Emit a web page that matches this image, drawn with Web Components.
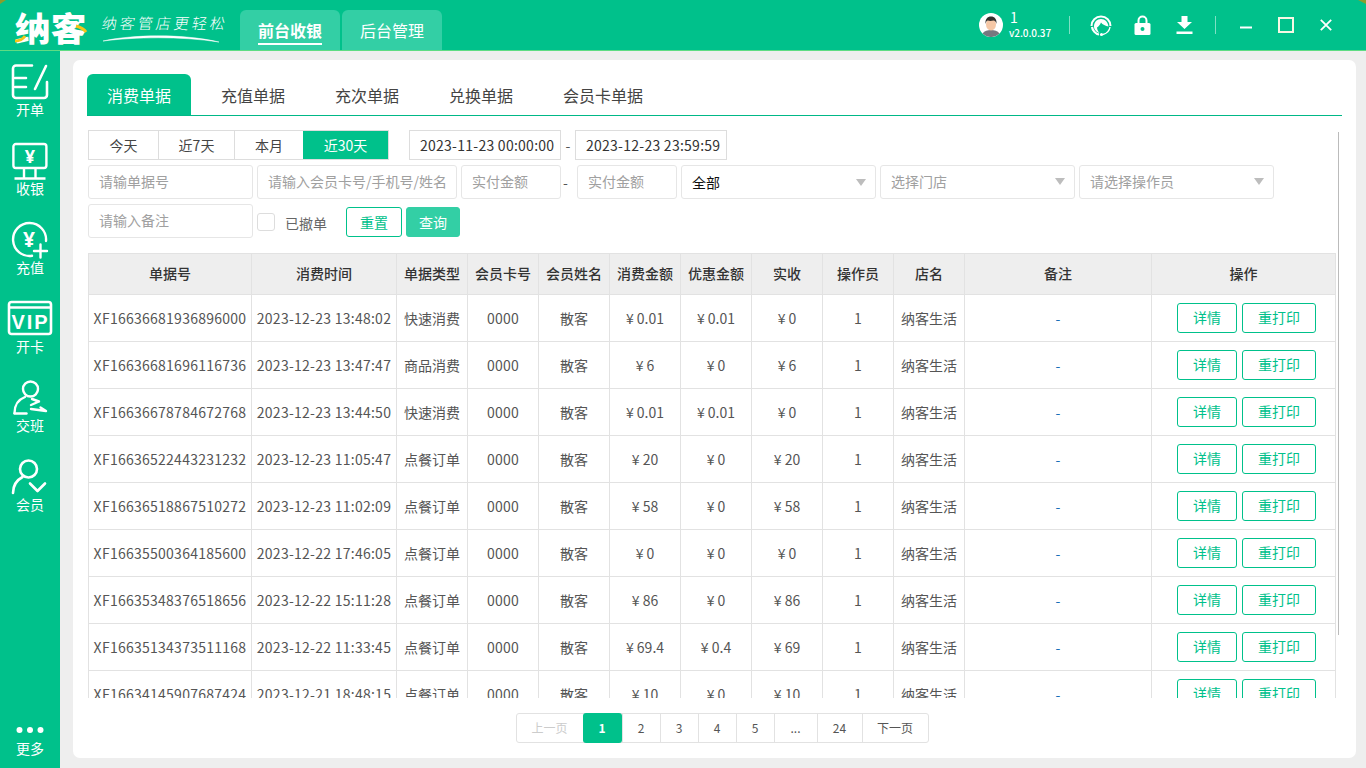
<!DOCTYPE html>
<html lang="zh">
<head>
<meta charset="utf-8">
<title>纳客</title>
<style>
    html, body { margin: 0; height: 100%; overflow: hidden; }
    body { font-family: "Noto Sans CJK SC", "Noto Sans", sans-serif; font-size: 14px; color: #555; background: #eee; }
</style>
</head>
<body>
<nk-app>
    <nk-top-bar slot="top"></nk-top-bar>
    <nk-side-nav slot="side">
        <nk-nav-item label="开单">
            <svg width="38" height="38" viewBox="0 0 38 38" fill="none" stroke="#fff" stroke-width="2.6" stroke-linecap="round">
                <path d="M21 2.5H5a3 3 0 0 0-3 3V32a3 3 0 0 0 3 3h28a3 3 0 0 0 3-3V19"/>
                <path d="M4 15h11M4 24h11M35 3 24 26"/>
            </svg>
        </nk-nav-item>
        <nk-nav-item label="收银">
            <svg width="38" height="38" viewBox="0 0 38 38" fill="none" stroke="#fff" stroke-width="2.4">
                <rect x="2.4" y="2" width="33" height="24" rx="2.5"/>
                <path d="M13 26v10M24.5 26v10M3.5 36.5h31"/>
                <text x="19" y="21" text-anchor="middle" font-size="18" font-weight="700" fill="#fff" stroke="none" font-family="Noto Sans, sans-serif">¥</text>
            </svg>
        </nk-nav-item>
        <nk-nav-item label="充值">
            <svg width="38" height="38" viewBox="0 0 38 38" fill="none" stroke="#fff" stroke-width="2.4" stroke-linecap="round">
                <path d="M35 20A16.5 16.5 0 1 0 21 34.800"/>
                <path d="M29.5 23.5v13M23 30h13"/>
                <text x="18" y="26" text-anchor="middle" font-size="21" font-weight="700" fill="#fff" stroke="none" font-family="Noto Sans, sans-serif">¥</text>
            </svg>
        </nk-nav-item>
        <nk-nav-item label="开卡">
            <svg width="46" height="38" viewBox="0 0 46 38" fill="none" stroke="#fff" stroke-width="2.6">
                <rect x="2" y="2" width="42" height="32" rx="2.5"/>
                <path d="M2 7.5h42"/>
                <text x="23.5" y="29" text-anchor="middle" font-size="20" font-weight="700" letter-spacing="2" fill="#fff" stroke="none" font-family="Liberation Sans, sans-serif">VIP</text>
            </svg>
        </nk-nav-item>
        <nk-nav-item label="交班">
            <svg width="38" height="38" viewBox="0 0 38 38" fill="none" stroke="#fff" stroke-width="2.4" stroke-linecap="round" stroke-linejoin="round">
                <circle cx="19.5" cy="10" r="7.5"/>
                <path d="M3.5 34c0-8 4-13.500 10.500-16"/>
                <path d="M3.5 34.500h12"/>
                <path d="M21 20l7 2.500-8 3.500"/>
                <path d="M20 30l15 2-5.500-3.500"/>
            </svg>
        </nk-nav-item>
        <nk-nav-item label="会员">
            <svg width="38" height="38" viewBox="0 0 38 38" fill="none" stroke="#fff" stroke-width="2.6" stroke-linecap="round" stroke-linejoin="round">
                <circle cx="17.5" cy="11" r="8.5"/>
                <path d="M2 35c0-7 4-13 9.500-16"/>
                <path d="M19 25.500l7.500 7.500 7.500-7.500"/>
            </svg>
        </nk-nav-item>
        <nk-nav-item label="更多" class="more">
            <svg width="30" height="10" viewBox="0 0 30 10" fill="#fff">
                <circle cx="4.5" cy="5" r="3"/><circle cx="15" cy="5" r="3"/><circle cx="25.5" cy="5" r="3"/>
            </svg>
        </nk-nav-item>
    </nk-side-nav>
    <nk-receipts slot="main"></nk-receipts>
</nk-app>

<script>
class NkApp extends HTMLElement {
    constructor() {
        super();
        this.attachShadow({ mode: 'open' });
    }

    connectedCallback() {
        this.shadowRoot.innerHTML = `
            <style>
                :host { display: grid; grid-template-columns: 60px 1fr; grid-template-rows: 51px 1fr; width: 1366px; height: 768px; }
                .top { grid-column: 1 / 3; }
                .main { background: #eee; padding: 9px 10px 10px 13px; min-width: 0; min-height: 0; display: flex; }
            </style>
            <div class="top"><slot name="top"></slot></div>
            <slot name="side"></slot>
            <div class="main"><slot name="main"></slot></div>
        `;
    }
}

class NkTopBar extends HTMLElement {
    constructor() {
        super();
        this.attachShadow({ mode: 'open' });
    }

    connectedCallback() {
        this.shadowRoot.innerHTML = `
            <style>
                :host { display: flex; height: 50px; background: #00c18b; border-bottom: 1px solid #5fdc83; color: #fff; align-items: stretch; position: relative; }
                .logo { width: 240px; flex: none; position: relative; }
                .mark { position: absolute; left: 15px; top: 3px; font-size: 33px; line-height: 48px; font-weight: 900; letter-spacing: 0; color: #fff; transform: scaleX(1.08); transform-origin: left center; white-space: nowrap; }
                .slogan { position: absolute; left: 102px; top: 10px; font-size: 15px; line-height: 26px; letter-spacing: 3px; font-weight: 300; transform: skewX(-10deg); white-space: nowrap; }
                .deco { position: absolute; left: 0; top: 0; }
                .tabs { display: flex; gap: 2px; padding-top: 10px; }
                .tab { width: 100px; background: #33cfa5; border-radius: 6px 6px 0 0; font-size: 16px; display: flex; align-items: center; justify-content: center; box-sizing: border-box; }
                .tab.on span { font-weight: 700; border-bottom: 2px solid #fff; line-height: 26px; margin-top: 2px; }
                .right { margin-left: auto; display: flex; align-items: center; }
                .user { display: flex; align-items: center; gap: 6px; width: 90px; }
                .who { display: flex; flex-direction: column; margin-top: -1px; }
                .who b { font-weight: 400; font-size: 14px; line-height: 16px; padding-left: 1px; }
                .who i { font-style: normal; font-weight: 500; font-size: 10px; letter-spacing: -.1px; line-height: 16px; }
                .sep { width: 1px; height: 18px; background: #7fe0c4; }
                svg { display: block; flex: none; }
                .corner { position: absolute; top: 0; }
            </style>
            <div class="logo">
                <span class="mark">纳客</span>
                <span class="slogan">纳客管店更轻松</span>
                <svg class="deco" width="240" height="50" fill="none">
                    <path d="M15 41c4 0 8-2 10-5" stroke="#f5c518" stroke-width="3"/>
                    <path d="M76 26c4 1 8 3 10 6" stroke="#f5c518" stroke-width="3"/>
                    <path d="M103 41C130 35 180 33 219 42 180 36 135 37 103 41z" fill="#fff" stroke="#fff" stroke-width=".5"/>
                </svg>
            </div>
            <div class="tabs">
                <div class="tab on"><span>前台收银</span></div>
                <div class="tab"><span>后台管理</span></div>
            </div>
            <div class="right">
                <div class="user">
                    <svg width="24" height="24" viewBox="0 0 24 24">
                        <circle cx="12" cy="12" r="12" fill="#fff"/>
                        <path d="M3.5 20.500c2-3 5-3.500 8.500-3.500s6.500.5 8.500 3.500a12 12 0 0 1-17 0z" fill="#77777f"/>
                        <ellipse cx="12" cy="11.500" rx="5" ry="6" fill="#f5c7a6"/>
                        <path d="M6.500 11c-.5-5 2-7.500 5.500-7.500s6 2.500 5.500 7.500c-.5-2-1.500-3.500-3-3.500-2 .5-4.500.5-5.500 0-1.500 0-2 1.500-2.500 3.500z" fill="#33302e"/>
                    </svg>
                    <div class="who"><b>1</b><i>v2.0.0.37</i></div>
                </div>
                <div class="sep"></div>
                <svg style="margin-left:20px" width="22" height="24" viewBox="0 0 22 24" fill="none" stroke="#fff">
                    <path d="M1.500 13a9.500 9.500 0 0 1 19 0" stroke-width="2"/>
                    <path d="M4 13.500C4 9 7 6 11 6s7 3 7.500 7.500c-3-.5-6-2-7.500-4-1 2.500-2.500 4-4 5 .2 2 1 4 2.500 5.500C6 19 4 16 4 13.500z" fill="#fff" stroke="none"/>
                    <path d="M2 14c.5 3.500 3.500 7 7 7.500" stroke-width="2.200"/>
                    <path d="M20 14c-.5 3.500-3.500 6.500-7 7.500" stroke-width="1.400"/>
                    <circle cx="11.500" cy="21.500" r="1.600" fill="#fff" stroke="none"/>
                </svg>
                <svg style="margin-left:22px" width="17" height="20" viewBox="0 0 17 20">
                    <path d="M4.500 9V5.500a4 4 0 0 1 8 0V9" fill="none" stroke="#fff" stroke-width="2"/>
                    <rect x=".5" y="8" width="16" height="12" rx="1.500" fill="#fff"/>
                    <circle cx="8.500" cy="14" r="2" fill="#00c18b"/>
                </svg>
                <svg style="margin-left:25px" width="17" height="20" viewBox="0 0 17 20" fill="#fff">
                    <path d="M5.500 1h6v6h4.500l-7.500 7-7.500-7h4.500z"/>
                    <rect x=".5" y="16.500" width="16" height="2.500"/>
                </svg>
                <div class="sep" style="margin-left:22px"></div>
                <svg style="margin-left:24px" width="12" height="16" viewBox="0 0 12 16"><rect y="9.500" width="12" height="2" fill="#fff"/></svg>
                <svg style="margin-left:26px" width="16" height="16" viewBox="0 0 16 16"><rect x="1" y="1" width="14" height="14" fill="none" stroke="#f6f8e4" stroke-width="2"/></svg>
                <svg style="margin-left:26px;margin-right:34px" width="12" height="12" viewBox="0 0 12 12"><path d="M.8.800l10.400 10.400M11.200.800.800 11.200" stroke="#fff" stroke-width="1.800"/></svg>
            </div>
            <svg class="corner" style="left:0" width="6" height="4"><path d="M0 0h6L0 4z" fill="#8c9c2c"/></svg>
            <svg class="corner" style="right:0" width="8" height="4"><path d="M0 0h8v4z" fill="#8c9c2c"/></svg>
        `;
    }
}

class NkSideNav extends HTMLElement {
    constructor() {
        super();
        this.attachShadow({ mode: 'open' });
    }

    connectedCallback() {
        this.shadowRoot.innerHTML = `
            <style>
                :host { display: flex; flex-direction: column; width: 60px; background: #00c18b; padding-top: 12px; box-sizing: border-box; }
                ::slotted(.more) { margin-top: auto; height: 34px; padding-bottom: 9px; }
            </style>
            <slot></slot>
        `;
    }
}

class NkNavItem extends HTMLElement {
    constructor() {
        super();
        this.attachShadow({ mode: 'open' });
    }

    connectedCallback() {
        this.shadowRoot.innerHTML = `
            <style>
                :host { display: flex; flex-direction: column; align-items: center; height: 79px; color: #fff; font-size: 14px; line-height: 20px; }
                .icon { height: 38px; display: flex; align-items: flex-start; justify-content: center; }
                .label { margin-top: -2px; }
                :host(.more) .icon { height: 10px; margin-bottom: 5px; }
            </style>
            <div class="icon"><slot></slot></div>
            <div class="label">${this.getAttribute('label')}</div>
        `;
    }
}

class NkTabs extends HTMLElement {
    constructor() {
        super();
        this.attachShadow({ mode: 'open' });
    }

    connectedCallback() {
        const tabs = (this.getAttribute('items') || '').split(',');
        this.shadowRoot.innerHTML = `
            <style>
                :host { display: flex; gap: 10px; height: 41px; border-bottom: 1px solid #00b887; font-size: 16px; color: #444; }
                div { padding: 0 20px; line-height: 43px; border-radius: 6px 6px 0 0; }
                .on { background: #00c18b; color: #fff; }
            </style>
            ${tabs.map((t, i) => `<div class="${i === 0 ? 'on' : ''}">${t}</div>`).join('')}
        `;
    }
}

class NkRange extends HTMLElement {
    constructor() {
        super();
        this.attachShadow({ mode: 'open' });
    }

    connectedCallback() {
        const widths = [69, 76, 69, 85];
        const items = ['今天', '近7天', '本月', '近30天'];
        this.shadowRoot.innerHTML = `
            <style>
                :host { display: flex; height: 30px; box-sizing: border-box; border: 1px solid #ddd; }
                div { display: flex; align-items: center; justify-content: center; border-left: 1px solid #ddd; box-sizing: border-box; color: #444; padding-bottom: 1px; }
                div:first-of-type { border-left: 0; }
                .on { background: #00c18b; color: #fff; border-left: 0; }
            </style>
            ${items.map((t, i) => `<div class="${i === 3 ? 'on' : ''}" style="width:${widths[i]}px">${t}</div>`).join('')}
        `;
    }
}

class NkField extends HTMLElement {
    constructor() {
        super();
        this.attachShadow({ mode: 'open' });
    }

    connectedCallback() {
        const w = this.getAttribute('w');
        const arrow = this.hasAttribute('arrow');
        this.shadowRoot.innerHTML = `
            <style>
                :host { display: flex; align-items: center; box-sizing: border-box; width: ${w}px; height: 34px; padding: 0 10px 2px; border: 1px solid #e6e6e6; border-radius: 3px; color: #a0a0a0; white-space: nowrap; overflow: hidden; }
                :host([value]) { color: #111; padding-bottom: 0; }
                :host([date]) { height: 30px; border-color: #ddd; border-radius: 0; color: #333; letter-spacing: .26px; padding-bottom: 1px; }
                i { margin-left: auto; width: 0; height: 0; border: 5.5px solid transparent; border-top: 7px solid #bdbdbd; border-bottom: 0; margin-right: -1px; }
            </style>
            <slot></slot>${arrow ? '<i></i>' : ''}
        `;
    }
}

class NkButton extends HTMLElement {
    constructor() {
        super();
        this.attachShadow({ mode: 'open' });
    }

    connectedCallback() {
        this.shadowRoot.innerHTML = `
            <style>
                :host { display: inline-flex; align-items: center; justify-content: center; box-sizing: border-box; height: 30px; padding-bottom: 1px; border: 1px solid #00c18b; border-radius: 3px; color: #00c18b; background: #fff; font-size: 14px; white-space: nowrap; }
                :host([solid]) { background: #33cfa5; border-color: #33cfa5; color: #fff; }
            </style>
            <slot></slot>
        `;
    }
}

class NkFilters extends HTMLElement {
    constructor() {
        super();
        this.attachShadow({ mode: 'open' });
    }

    connectedCallback() {
        this.shadowRoot.innerHTML = `
            <style>
                :host { display: flex; flex-direction: column; gap: 5px; padding-left: 1px; }
                .row { display: flex; align-items: center; gap: 4px; }
                .dash { text-align: center; color: #555; }
                .check { width: 18px; height: 18px; box-sizing: border-box; border: 1px solid #ddd; border-radius: 3px; margin-top: 1px; }
                .undo { margin-left: 6px; margin-top: 4px; color: #666; }
            </style>
            <div class="row">
                <nk-range></nk-range>
                <nk-field date w="152" style="margin-left:16px">2023-11-23 00:00:00</nk-field>
                <span class="dash" style="width:6px">-</span>
                <nk-field date w="152">2023-12-23 23:59:59</nk-field>
            </div>
            <div class="row">
                <nk-field w="165">请输单据号</nk-field>
                <nk-field w="200">请输入会员卡号/手机号/姓名</nk-field>
                <nk-field w="100">实付金额</nk-field>
                <span class="dash" style="width:8px;text-align:left;transform:translateX(-2px)">-</span>
                <nk-field w="100">实付金额</nk-field>
                <nk-field w="195" value arrow>全部</nk-field>
                <nk-field w="195" arrow>选择门店</nk-field>
                <nk-field w="195" arrow>请选择操作员</nk-field>
            </div>
            <div class="row">
                <nk-field w="165">请输入备注</nk-field>
                <span class="check"></span>
                <span class="undo">已撤单</span>
                <nk-button style="width:56px;margin-left:15px;margin-top:2px">重置</nk-button>
                <nk-button solid style="width:54px;margin-top:2px">查询</nk-button>
            </div>
        `;
    }
}

const orderRows = [
    ['XF16636681936896000', '2023-12-23 13:48:02', '快速消费', '¥ 0.01', '¥ 0.01', '¥ 0'],
    ['XF16636681696116736', '2023-12-23 13:47:47', '商品消费', '¥ 6', '¥ 0', '¥ 6'],
    ['XF16636678784672768', '2023-12-23 13:44:50', '快速消费', '¥ 0.01', '¥ 0.01', '¥ 0'],
    ['XF16636522443231232', '2023-12-23 11:05:47', '点餐订单', '¥ 20', '¥ 0', '¥ 20'],
    ['XF16636518867510272', '2023-12-23 11:02:09', '点餐订单', '¥ 58', '¥ 0', '¥ 58'],
    ['XF16635500364185600', '2023-12-22 17:46:05', '点餐订单', '¥ 0', '¥ 0', '¥ 0'],
    ['XF16635348376518656', '2023-12-22 15:11:28', '点餐订单', '¥ 86', '¥ 0', '¥ 86'],
    ['XF16635134373511168', '2023-12-22 11:33:45', '点餐订单', '¥ 69.4', '¥ 0.4', '¥ 69'],
    ['XF16634145907687424', '2023-12-21 18:48:15', '点餐订单', '¥ 10', '¥ 0', '¥ 10']
];

class NkOrderTable extends HTMLElement {
    constructor() {
        super();
        this.attachShadow({ mode: 'open' });
    }

    connectedCallback() {
        const cols = [163, 145, 71, 71, 71, 71, 71, 71, 71, 71, 187, 184];
        const heads = ['单据号', '消费时间', '单据类型', '会员卡号', '会员姓名', '消费金额', '优惠金额', '实收', '操作员', '店名', '备注', '操作'];
        this.shadowRoot.innerHTML = `
            <style>
                :host { display: block; height: 445px; overflow: hidden; margin-left: 1px; }
                table { border-collapse: collapse; table-layout: fixed; width: 1247px; }
                th, td { border: 1px solid #e2e2e2; padding: 0; text-align: center; white-space: nowrap; overflow: hidden; }
                th { height: 38px; padding-bottom: 2px; background: #eee; color: #333; font-weight: 500; }
                td { height: 45px; padding-bottom: 1px; color: #555; }
                .num { letter-spacing: .26px; }
                .note { color: #1a6fb8; }
                .ops { display: flex; justify-content: center; gap: 5px; padding-left: 6px; }
                .ops nk-button:first-child { width: 60px; }
                .ops nk-button:last-child { width: 74px; }
            </style>
            <table>
                <colgroup>${cols.map(w => `<col style="width:${w}px">`).join('')}</colgroup>
                <thead><tr>${heads.map(h => `<th>${h}</th>`).join('')}</tr></thead>
                <tbody>
                    ${orderRows.map(r => `
                        <tr>
                            <td class="num">${r[0]}</td><td class="num">${r[1]}</td><td>${r[2]}</td><td class="num">0000</td><td>散客</td>
                            <td>${r[3]}</td><td>${r[4]}</td><td>${r[5]}</td><td>1</td><td>纳客生活</td>
                            <td class="note">-</td>
                            <td><div class="ops"><nk-button>详情</nk-button><nk-button>重打印</nk-button></div></td>
                        </tr>`).join('')}
                </tbody>
            </table>
        `;
    }
}

class NkPager extends HTMLElement {
    constructor() {
        super();
        this.attachShadow({ mode: 'open' });
    }

    connectedCallback() {
        const pages = [['上一页', 66, 'off'], ['1', 39, 'on'], ['2', 38], ['3', 38], ['4', 38], ['5', 38], ['...', 43], ['24', 45], ['下一页', 66]];
        this.shadowRoot.innerHTML = `
            <style>
                :host { display: flex; height: 30px; font-size: 12px; color: #555; box-sizing: border-box; border: 1px solid #e2e2e2; border-radius: 3px; width: max-content; }
                div { display: flex; align-items: center; justify-content: center; box-sizing: border-box; border-left: 1px solid #e2e2e2; padding: 0 1px 1px 0; }
                div:first-of-type { border-left: 0; }
                .off { color: #ccc; }
                .on { background: #00c18b; color: #fff; border: 0; border-radius: 3px; margin: -1px 0; font-weight: 700; }
            </style>
            ${pages.map(p => `<div class="${p[2] || ''}" style="width:${p[1]}px">${p[0]}</div>`).join('')}
        `;
    }
}

class NkReceipts extends HTMLElement {
    constructor() {
        super();
        this.attachShadow({ mode: 'open' });
    }

    connectedCallback() {
        this.shadowRoot.innerHTML = `
            <style>
                :host { display: flex; flex-direction: column; flex: 1; box-sizing: border-box; background: #fff; border-radius: 7px; padding: 14px 14px 0; min-width: 0; }
                .pane { position: relative; padding-top: 14px; }
                .scroll { position: absolute; right: 3px; top: 16px; width: 1px; height: 503px; background: #bbb; }
                nk-filters { margin-bottom: 15px; }
                .foot { display: flex; justify-content: center; padding: 15px 0 0 16px; }
            </style>
            <nk-tabs items="消费单据,充值单据,充次单据,兑换单据,会员卡单据"></nk-tabs>
            <div class="pane">
                <nk-filters></nk-filters>
                <nk-order-table></nk-order-table>
                <div class="scroll"></div>
            </div>
            <div class="foot"><nk-pager></nk-pager></div>
        `;
    }
}

customElements.define('nk-app', NkApp);
customElements.define('nk-top-bar', NkTopBar);
customElements.define('nk-side-nav', NkSideNav);
customElements.define('nk-nav-item', NkNavItem);
customElements.define('nk-tabs', NkTabs);
customElements.define('nk-range', NkRange);
customElements.define('nk-field', NkField);
customElements.define('nk-button', NkButton);
customElements.define('nk-filters', NkFilters);
customElements.define('nk-order-table', NkOrderTable);
customElements.define('nk-pager', NkPager);
customElements.define('nk-receipts', NkReceipts);
</script>
</body>
</html>
